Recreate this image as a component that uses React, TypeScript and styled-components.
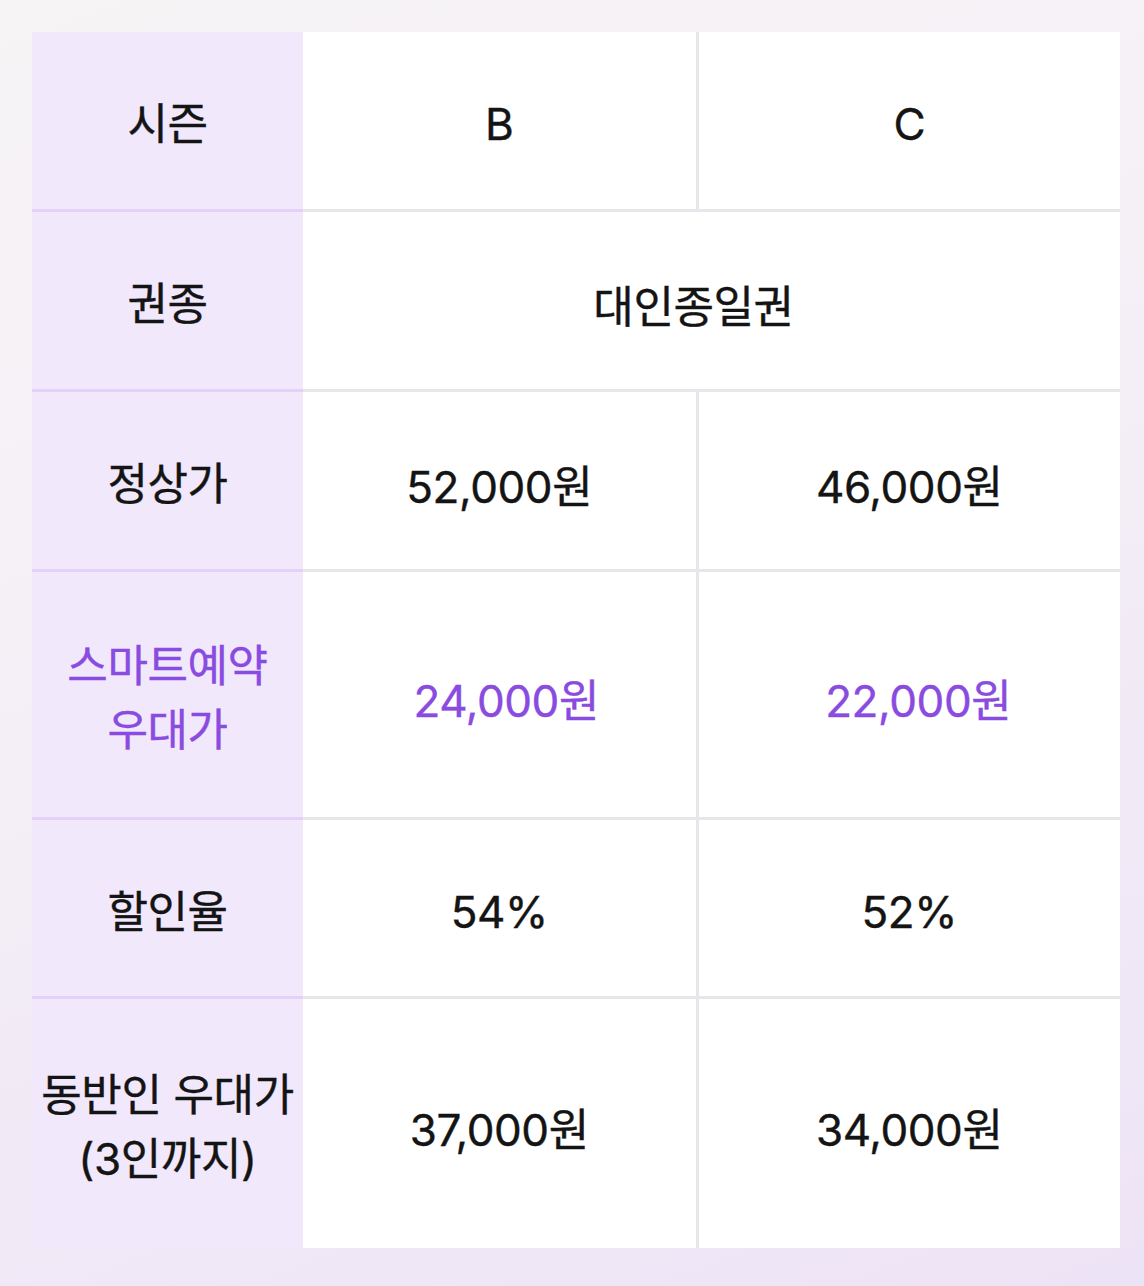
import React from "react";
import styled, { createGlobalStyle } from "styled-components";

const GlobalStyle = createGlobalStyle`
  html, body {
    margin: 0;
    padding: 0;
  }
  body {
    background: linear-gradient(160deg, #f7f4f6 0%, #f4eff6 45%, #ede3f6 100%);
    min-height: 1286px;
    font-family: "Inter", "Noto Sans CJK KR", sans-serif;
    color: #141414;
  }
`;

const Page = styled.div`
  padding: 32px 24px 38px 32px;
`;

const PriceTable = styled.table`
  width: 1088px;
  border-collapse: collapse;
  table-layout: fixed;
  background: #fff;
  font-size: 44px;
  letter-spacing: -0.4px;
  -webkit-text-stroke: 0.4px currentColor;
`;

const Row = styled.tr<{ $h: number }>`
  height: ${(p) => p.$h}px;
`;

const HeadCell = styled.th<{ $last?: boolean; $accent?: boolean }>`
  background: #f1e8fc;
  font-weight: 400;
  text-align: center;
  vertical-align: middle;
  line-height: 64px;
  padding: 8px 0 0;
  color: ${(p) => (p.$accent ? "#8a4be0" : "#141414")};
  border-bottom: ${(p) => (p.$last ? "none" : "3px solid #e3d1f7")};
`;

const Cell = styled.td<{
  $last?: boolean;
  $accent?: boolean;
  $divider?: boolean;
  $shift?: number;
}>`
  text-align: center;
  vertical-align: middle;
  padding: 8px 0 0 ${(p) => (p.$shift && p.$shift > 0 ? p.$shift : 0)}px;
  padding-right: ${(p) => (p.$shift && p.$shift < 0 ? -p.$shift : 0)}px;
  color: ${(p) => (p.$accent ? "#8a4be0" : "#141414")};
  border-bottom: ${(p) => (p.$last ? "none" : "3px solid #e8e6ea")};
  border-right: ${(p) => (p.$divider ? "3px solid #e8e6ea" : "none")};
`;

type Line = {
  label: React.ReactNode;
  b: string;
  c?: string;
  h: number;
  accent?: boolean;
};

const lines: Line[] = [
  { label: "시즌", b: "B", c: "C", h: 178 },
  { label: "권종", b: "대인종일권", h: 180 },
  { label: "정상가", b: "52,000원", c: "46,000원", h: 180 },
  {
    label: (
      <>
        스마트예약
        <br />
        우대가
      </>
    ),
    b: "24,000원",
    c: "22,000원",
    h: 248,
    accent: true,
  },
  { label: "할인율", b: "54%", c: "52%", h: 179 },
  {
    label: (
      <>
        동반인 우대가
        <br />
        (3인까지)
      </>
    ),
    b: "37,000원",
    c: "34,000원",
    h: 251,
  },
];

export default function App() {
  return (
    <>
      <GlobalStyle />
      <Page>
        <PriceTable>
          <colgroup>
            <col style={{ width: 271 }} />
            <col style={{ width: 394 }} />
            <col />
          </colgroup>
          <tbody>
            {lines.map((l, i) => {
              const last = i === lines.length - 1;
              return (
                <Row key={i} $h={l.h}>
                  <HeadCell $last={last} $accent={l.accent}>
                    {l.label}
                  </HeadCell>
                  {l.c === undefined ? (
                    <Cell colSpan={2} $last={last} $shift={-36}>
                      {l.b}
                    </Cell>
                  ) : (
                    <>
                      <Cell
                        $last={last}
                        $accent={l.accent}
                        $divider
                        $shift={l.accent ? 14 : 0}
                      >
                        {l.b}
                      </Cell>
                      <Cell $last={last} $accent={l.accent} $shift={l.accent ? 18 : 0}>
                        {l.c}
                      </Cell>
                    </>
                  )}
                </Row>
              );
            })}
          </tbody>
        </PriceTable>
      </Page>
    </>
  );
}
